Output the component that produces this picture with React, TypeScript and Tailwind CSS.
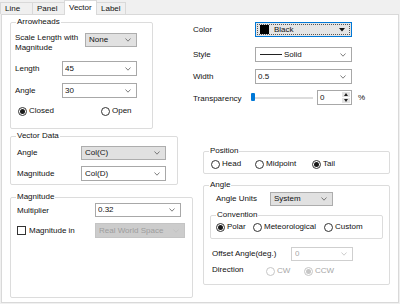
import React from 'react';

type SelectKind = 'white' | 'gray' | 'disabled' | 'disabledWhite';

function Chevron({ light }: { light?: boolean }) {
  return (
    <svg width="6" height="4" viewBox="0 0 6 4" className="shrink-0">
      <polyline
        points="0.5,0.5 3,3.2 5.5,0.5"
        fill="none"
        stroke={light ? '#c0c0c0' : '#606060'}
        strokeWidth="0.8"
      />
    </svg>
  );
}

function Select({
  value,
  kind = 'white',
  className = '',
  children,
}: {
  value?: string;
  kind?: SelectKind;
  className?: string;
  children?: React.ReactNode;
}) {
  const styles: Record<SelectKind, string> = {
    white: 'bg-white border-[#a8a8a8] text-[#111]',
    gray: 'bg-[#e1e1e1] border-[#adadad] text-[#111]',
    disabled: 'bg-[#cccccc] border-[#c4c4c4] text-[#9d9d9d]',
    disabledWhite: 'bg-white border-[#cfcfcf] text-[#a8a8a8]',
  };
  const light = kind === 'disabled' || kind === 'disabledWhite';
  return (
    <div className={`flex items-center border pl-[3px] pr-[5px] ${styles[kind]} ${className}`}>
      <div className="flex-1 flex items-center truncate">{children ?? value}</div>
      <Chevron light={light} />
    </div>
  );
}

function Radio({ label, checked, disabled, className = '' }: { label: string; checked?: boolean; disabled?: boolean; className?: string }) {
  return (
    <div className={`flex items-center gap-[2px] h-[10px] ${className}`}>
      <span
        className={`w-[9px] h-[9px] rounded-full border flex items-center justify-center shrink-0 ${
          disabled ? 'border-[#c6c6c6]' : 'border-[#333]'
        }`}
      >
        {checked && <span className={`w-[5px] h-[5px] rounded-full ${disabled ? 'bg-[#c6c6c6]' : 'bg-[#1a1a1a]'}`} />}
      </span>
      <span className={disabled ? 'text-[#a6a6a6]' : ''}>{label}</span>
    </div>
  );
}

function Group({ title, className = '', children }: { title: string; className?: string; children?: React.ReactNode }) {
  return (
    <div className={`border border-[#dcdcdc] rounded-[2px] ${className}`}>
      <div className="-mt-[6px] ml-[5px] w-fit bg-white px-[1px] leading-[10px]">{title}</div>
      {children}
    </div>
  );
}

function Tab({ label, active, first }: { label: string; active?: boolean; first?: boolean }) {
  if (active) {
    return (
      <div className="relative z-10 -ml-[1px] -mb-[1px] h-[15px] w-[33px] border border-b-0 border-[#d9d9d9] bg-white pl-[4px] leading-[13px]">
        {label}
      </div>
    );
  }
  return (
    <div
      className={`h-[12px] border border-b-0 border-[#d9d9d9] bg-[#f0f0f0] pl-[4px] leading-[11px] ${
        first ? 'w-[33px]' : '-ml-[1px] w-[33px]'
      }`}
    >
      {label}
    </div>
  );
}

export default function App() {
  return (
    <div className="w-[400px] h-[304px] bg-[#f0f0f0] font-['Liberation_Sans',Arial,sans-serif] text-[8px] text-[#111] overflow-hidden">
      {/* Tabs */}
      <div className="flex items-end h-[14px]">
        <Tab label="Line" first />
        <Tab label="Panel" />
        <Tab label="Vector" active />
        <div className="-ml-[1px] h-[12px] w-[30px] border border-b-0 border-[#d9d9d9] bg-[#f0f0f0] pl-[4px] leading-[11px]">
          Label
        </div>
      </div>

      {/* Tab page */}
      <div className="ml-[1px] w-[398px] h-[289px] border border-[#d9d9d9] bg-white flex pl-[8px]">
        {/* Left column */}
        <div className="w-[183px] flex flex-col">
          <Group title="Arrowheads" className="mt-[7px] w-[143px] h-[107px]">
            <div className="pt-[6px] pl-[4px]">
              <div className="flex items-start">
                <div className="w-[70px] leading-[10px]">
                  Scale Length with
                  <br />
                  Magnitude
                </div>
                <Select kind="gray" value="None" className="w-[52px] h-[14px]" />
              </div>
              <div className="mt-[8px] flex items-center">
                <div className="w-[47px]">Length</div>
                <Select value="45" className="w-[75px] h-[15px] !pl-[2px]" />
              </div>
              <div className="mt-[7px] flex items-center">
                <div className="w-[47px]">Angle</div>
                <Select value="30" className="w-[75px] h-[15px] !pl-[2px]" />
              </div>
              <div className="mt-[8px] flex items-center ml-[3px]">
                <Radio label="Closed" checked className="w-[83px]" />
                <Radio label="Open" />
              </div>
            </div>
          </Group>

          <Group title="Vector Data" className="mt-[7px] w-[168px] h-[49px]">
            <div className="pt-[5px] pl-[6px]">
              <div className="flex items-center">
                <div className="w-[64px]">Angle</div>
                <Select kind="gray" value="Col(C)" className="w-[85px] h-[14px]" />
              </div>
              <div className="mt-[6px] flex items-center">
                <div className="w-[64px]">Magnitude</div>
                <Select value="Col(D)" className="w-[85px] h-[15px]" />
              </div>
            </div>
          </Group>

          <Group title="Magnitude" className="mt-[12px] w-[183px] h-[101px]">
            <div className="pl-[6px]">
              <div className="flex items-center">
                <div className="w-[78px] pt-[3px]">Multiplier</div>
                <Select value="0.32" className="w-[86px] h-[14px] !pl-[2px]" />
              </div>
              <div className="mt-[6px] flex items-center">
                <div className="w-[78px] flex items-center gap-[3px]">
                  <span className="w-[9px] h-[9px] border border-[#333] bg-white shrink-0" />
                  <span>Magnitude in</span>
                </div>
                <Select kind="disabled" value="Real World Space" className="w-[90px] h-[15px]" />
              </div>
            </div>
          </Group>
        </div>

        {/* Right column */}
        <div className="w-[197px] flex flex-col">
          <div className="mt-[7px] flex items-center h-[15px]">
            <div className="w-[62px]">Color</div>
            <div className="w-[97px] h-[15px] border border-[#0078d7] bg-[#e5e5e5] p-[1px]">
              <div className="h-full flex items-center border border-dotted border-[#555] pl-[2px] pr-[4px]">
                <span className="w-[9px] h-[9px] bg-black shrink-0" />
                <span className="ml-[5px] flex-1">Black</span>
                <svg width="6" height="4" viewBox="0 0 6 4">
                  <polygon points="0,0 6,0 3,3.5" fill="#111" />
                </svg>
              </div>
            </div>
          </div>

          <div className="mt-[10px] flex items-center h-[15px]">
            <div className="w-[62px]">Style</div>
            <Select className="w-[97px] h-[15px]">
              <span className="w-[22px] h-[1px] bg-[#222] ml-[1px]" />
              <span className="ml-[2px]">Solid</span>
            </Select>
          </div>

          <div className="mt-[7px] flex items-center h-[15px]">
            <div className="w-[62px]">Width</div>
            <Select value="0.5" className="w-[97px] h-[15px] !pl-[2px]" />
          </div>

          <div className="mt-[6px] flex items-center h-[15px]">
            <div className="w-[58px] pt-[3px]">Transparency</div>
            <div className="w-[62px] h-[10px] flex items-center">
              <span className="w-[4px] h-[8px] rounded-[1px] bg-[#0078d7] shrink-0 mt-[-2px]" />
              <span className="flex-1 h-[2px] bg-[#dcdcdc]" />
            </div>
            <div className="ml-[4px] w-[35px] h-[15px] border border-[#a8a8a8] bg-white flex">
              <span className="flex-1 pl-[2px] leading-[13px]">0</span>
              <div className="w-[8px] mr-[1px] my-[1px] flex flex-col gap-[1px]">
                <div className="flex-1 bg-[#e3e3e3] flex items-center justify-center">
                  <svg width="4" height="3" viewBox="0 0 4 3">
                    <polygon points="0,3 4,3 2,0" fill="#222" />
                  </svg>
                </div>
                <div className="flex-1 bg-[#e3e3e3] flex items-center justify-center">
                  <svg width="4" height="3" viewBox="0 0 4 3">
                    <polygon points="0,0 4,0 2,3" fill="#222" />
                  </svg>
                </div>
              </div>
            </div>
            <span className="ml-[6px]">%</span>
          </div>

          <Group title="Position" className="mt-[46px] ml-[10px] w-[187px] h-[23px]">
            <div className="pt-[3px] pl-[7px] flex items-center">
              <Radio label="Head" className="w-[44px]" />
              <Radio label="Midpoint" className="w-[57px]" />
              <Radio label="Tail" checked />
            </div>
          </Group>

          <Group title="Angle" className="mt-[11px] ml-[10px] w-[187px] h-[100px]">
            <div className="pt-[2px] pl-[6px]">
              <div className="ml-[6px] flex items-center">
                <div className="w-[54px]">Angle Units</div>
                <Select kind="gray" value="System" className="w-[63px] h-[14px]" />
              </div>

              <Group title="Convention" className="mt-[9px] w-[173px] h-[24px]">
                <div className="pt-[2px] pl-[5px] flex items-center">
                  <Radio label="Polar" checked className="w-[37px]" />
                  <Radio label="Meteorological" className="w-[71px]" />
                  <Radio label="Custom" />
                </div>
              </Group>

              <div className="mt-[8px] ml-[2px] flex items-center">
                <div className="w-[79px]">Offset Angle(deg.)</div>
                <Select kind="disabledWhite" value="0" className="w-[62px] h-[14px]" />
              </div>

              <div className="mt-[5px] ml-[2px] flex items-center">
                <div className="w-[54px] -mt-[3px]">Direction</div>
                <Radio label="CW" disabled className="w-[38px]" />
                <Radio label="CCW" checked disabled />
              </div>
            </div>
          </Group>
        </div>
      </div>
    </div>
  );
}
